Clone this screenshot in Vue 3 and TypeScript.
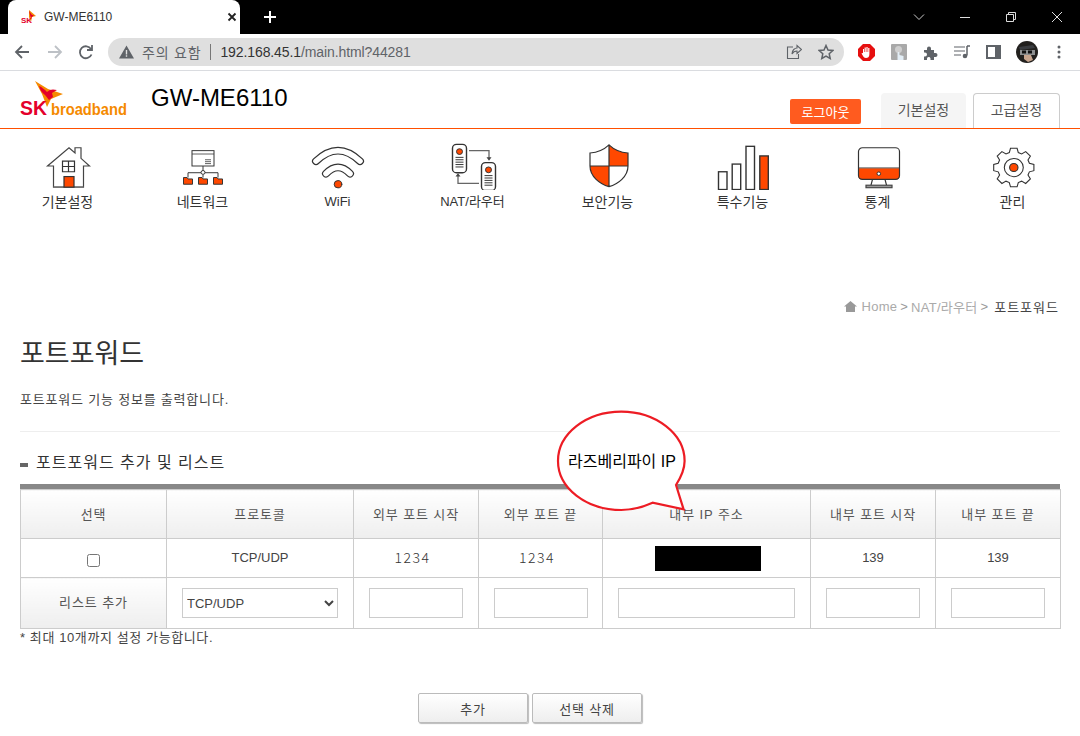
<script setup lang="ts">
interface PortRow {
  protocol: string
  extStart: string
  extEnd: string
  intStart: string
  intEnd: string
}

const columns = ['선택', '프로토콜', '외부 포트 시작', '외부 포트 끝', '내부 IP 주소', '내부 포트 시작', '내부 포트 끝']

const row: PortRow = {
  protocol: 'TCP/UDP',
  extStart: '1234',
  extEnd: '1234',
  intStart: '139',
  intEnd: '139'
}

// 8 teeth around the centre of the gear icon
function gearPath(cx: number, cy: number, outer: number, inner: number): string {
  const points: string[] = []
  const teeth = 8
  for (let i = 0; i < teeth; i++) {
    const a = (i * Math.PI * 2) / teeth - Math.PI / 2
    const step = Math.PI / teeth
    const offsets: [number, number][] = [
      [-step * 0.72, inner],
      [-step * 0.42, outer],
      [step * 0.42, outer],
      [step * 0.72, inner]
    ]
    for (const [d, r] of offsets) {
      points.push(`${(cx + Math.cos(a + d) * r).toFixed(1)} ${(cy + Math.sin(a + d) * r).toFixed(1)}`)
    }
  }
  return 'M' + points.join('L') + 'Z'
}

const gear = gearPath(30.8, 26.6, 20.4, 16.2)
</script>

<template>
  <div class="page">
    <div class="tabstrip">
      <div class="tab">
        <svg class="favicon" width="16" height="16" viewBox="0 0 16 16">
          <path d="M8 1l7 6-4 1-1 5-2-5z" fill="#f58a00" />
          <path d="M8 2l3 4 2 0-3 3-1-3z" fill="#e4002b" />
          <text x="0" y="14" class="favicon-text">SK</text>
        </svg>
        <span class="tab-title">GW-ME6110</span>
        <svg class="tab-close" width="10" height="10" viewBox="0 0 10 10">
          <path d="M1.5 1.5l7 7M8.5 1.5l-7 7" stroke="#222" stroke-width="1.8" />
        </svg>
      </div>
      <svg class="tab-new" width="14" height="14" viewBox="0 0 14 14">
        <path d="M7 1v12M1 7h12" stroke="#fff" stroke-width="2" />
      </svg>
      <div class="window-controls">
        <svg width="12" height="8" viewBox="0 0 12 8"><path d="M1 1.5l5 5 5-5" fill="none" stroke="#ccc" /></svg>
        <svg width="12" height="12" viewBox="0 0 12 12"><path d="M1 6.5h10" stroke="#ddd" /></svg>
        <svg width="12" height="12" viewBox="0 0 12 12"><path d="M1.5 3.5h7v7h-7zM3.5 3.5v-2h7v7h-2" fill="none" stroke="#ddd" /></svg>
        <svg width="12" height="12" viewBox="0 0 12 12"><path d="M1 1l10 10M11 1L1 11" stroke="#ddd" /></svg>
      </div>
    </div>

    <div class="toolbar">
      <svg class="nav-btn" width="16" height="16" viewBox="0 0 16 16"><path d="M15 8H2M8 2L2 8l6 6" fill="none" stroke="#5f6368" stroke-width="1.8" /></svg>
      <svg class="nav-btn" width="16" height="16" viewBox="0 0 16 16"><path d="M1 8h13M8 2l6 6-6 6" fill="none" stroke="#bdc1c6" stroke-width="1.8" /></svg>
      <svg class="nav-btn" width="16" height="16" viewBox="0 0 16 16"><path d="M13.5 10.5A6 6 0 1 1 13 5M14 1v5H9" fill="none" stroke="#5f6368" stroke-width="1.8" /></svg>
      <div class="omnibox">
        <svg width="15" height="14" viewBox="0 0 15 14"><path d="M7.5 0.5L15 13.5H0zM6.8 5v4.5h1.4V5zM6.8 10.3v1.5h1.4v-1.5z" fill="#5f6368" fill-rule="evenodd" /></svg>
        <span class="warn">주의 요함</span>
        <span class="sep"></span>
        <span class="url"><b>192.168.45.1</b>/main.html?44281</span>
        <svg class="omni-share" width="16" height="16" viewBox="0 0 16 16"><path d="M7 3H1.5v11.5h11V10M6 10c0-4 3-6 5-6V1.5L15.5 5.5 11 9.5V7C9 7 7 8 6 10z" fill="none" stroke="#5f6368" stroke-width="1.1" /></svg>
        <svg width="16" height="16" viewBox="0 0 16 16"><path d="M8 1.5l2 4.5 4.8.5-3.6 3.2 1 4.8L8 12l-4.2 2.5 1-4.8L1.2 6.5 6 6z" fill="none" stroke="#5f6368" stroke-width="1.5" /></svg>
      </div>
      <div class="extensions">
        <svg width="17" height="17" viewBox="0 0 17 17">
          <path d="M5 0h7l5 5v7l-5 5H5l-5-5V5z" fill="#e60f0f" />
          <path d="M5 8V5h1v3h.6V3.5h1.2V8h.6V3h1.2v5h.6V4h1.2v6c0 3-1.5 4-3.4 4-1.5 0-2.4-.8-3-2L3.6 9.5c.3-.6 1-.6 1.4 0z" fill="#fff" />
        </svg>
        <svg width="16" height="16" viewBox="0 0 16 16">
          <rect width="16" height="16" rx="1" fill="#a9a9a9" />
          <circle cx="7.5" cy="5.5" r="3.5" fill="#cfcfcf" />
          <path d="M6.5 16V9c0-1.5 2-1.5 2 0v2l4 1v4z" fill="#e3eef6" />
        </svg>
        <svg width="15" height="15" viewBox="0 0 15 15"><path d="M1 5h3V3.5a2 2 0 0 1 4 0V5h3v3h1.5a2 2 0 0 1 0 4H11v3H7.5v-1.5a1.8 1.8 0 0 0-3.5 0V15H1v-3.5h1a2 2 0 0 0 0-4H1z" fill="#5f6368" /></svg>
        <svg width="16" height="14" viewBox="0 0 16 14"><path d="M0 2h11M0 6h11M0 10h7" stroke="#5f6368" stroke-width="1.2" /><path d="M13 1v9.5M13 1h3" stroke="#5f6368" stroke-width="1.5" fill="none" /><circle cx="11" cy="11" r="2.3" fill="#5f6368" /></svg>
        <svg width="15" height="14" viewBox="0 0 15 14"><path d="M0 0h15v14H0zM2 2v10h7V2z" fill="#5f6368" fill-rule="evenodd" /></svg>
        <svg class="avatar" width="22" height="22" viewBox="0 0 22 22">
          <circle cx="11" cy="11" r="11" fill="#22201e" />
          <path d="M4 9h15v5H4z" fill="#8d8f90" />
          <path d="M8 14h7l2 5-5 2-4-3z" fill="#c7a58e" />
          <path d="M6 9.5h4v3H6zM12 9.5h4v3h-4z" fill="#111" />
          <path d="M3 6l14-2 2 3-15 2z" fill="#3a3c40" />
        </svg>
        <svg class="dots" width="4" height="14" viewBox="0 0 4 14"><circle cx="2" cy="2" r="1.5" fill="#5f6368" /><circle cx="2" cy="7" r="1.5" fill="#5f6368" /><circle cx="2" cy="12" r="1.5" fill="#5f6368" /></svg>
      </div>
    </div>

    <header class="site-head">
      <svg class="logo" width="116" height="40" viewBox="0 0 116 40">
        <path d="M15 1l13 8 15 5-12 5-4 8-5-13z" fill="#f58a00" />
        <path d="M19 6c3 1 6 4 8 6 3-3 6-3 10-2l-5 3 1 4-4 3-4-5c-3-2-5-5-6-9z" fill="#e4002b" />
        <text x="0" y="35" class="logo-sk" textLength="27" lengthAdjust="spacingAndGlyphs">SK</text>
        <text x="31" y="34.5" class="logo-bb" textLength="76" lengthAdjust="spacingAndGlyphs">broadband</text>
      </svg>
      <h1 class="model">GW-ME6110</h1>
      <div class="head-actions">
        <button class="logout" type="button">로그아웃</button>
        <a class="mode-tab mode-basic">기본설정</a>
        <a class="mode-tab mode-adv">고급설정</a>
      </div>
    </header>

    <nav class="menu">
      <a class="menu-item">
        <svg width="60" height="48" viewBox="0 0 60 50" preserveAspectRatio="none" fill="none" stroke="#333" stroke-width="1.2">
          <path d="M15.5 47V25H9.5L31 6l6 5.5V6h6v11l8.5 8H45.5v22z" stroke="#444" />
          <path d="M15.5 47h30" stroke="#777" stroke-width="1.5" />
          <path d="M24.5 20h12v11h-12zM30.5 20v11M24.5 25.5h12" />
          <rect x="26" y="36" width="10" height="11" fill="#ff4800" stroke="#333" />
        </svg>
        <span class="ko">기본설정</span>
      </a>
      <a class="menu-item">
        <svg width="60" height="48" viewBox="0 0 60 50" preserveAspectRatio="none" fill="none" stroke="#333" stroke-width="1">
          <rect x="19" y="9" width="22" height="16" />
          <path d="M19 12.5h22M32 18.5h6M32 20.5h6M32 22.5h6" stroke-width="0.8" />
          <path d="M30 25v5M15 37v-5h30v5M30 34v3" />
          <circle cx="30" cy="31.7" r="2" fill="#fff" />
          <path d="M10.5 37h3.5l1 1.5h4.5V44h-9zM25.5 37h3.5l1 1.5h4.5V44h-9zM40.5 37h3.5l1 1.5h4.5V44h-9z" fill="#ff4800" />
        </svg>
        <span class="ko">네트워크</span>
      </a>
      <a class="menu-item">
        <svg width="60" height="48" viewBox="0 0 60 50" preserveAspectRatio="none" fill="none" stroke-linecap="round">
          <path d="M8 20Q30-2 52 20" stroke="#333" stroke-width="8" />
          <path d="M8 20Q30-2 52 20" stroke="#fff" stroke-width="5.6" />
          <path d="M18 33Q30 20 42 33" stroke="#333" stroke-width="8" />
          <path d="M18 33Q30 20 42 33" stroke="#fff" stroke-width="5.6" />
          <circle cx="30" cy="44" r="3.8" fill="#ff4800" stroke="#333" stroke-width="1" />
        </svg>
        <span>WiFi</span>
      </a>
      <a class="menu-item">
        <svg width="60" height="48" viewBox="0 0 60 50" preserveAspectRatio="none" fill="none" stroke="#333" stroke-width="1">
          <rect x="9.5" y="2.5" width="14" height="29.5" rx="4" stroke-width="1.4" />
          <rect x="38.5" y="21.5" width="14" height="29" rx="4" stroke-width="1.4" />
          <circle cx="16.5" cy="10" r="3" fill="#ff4800" />
          <circle cx="45.5" cy="29" r="3" fill="#ff4800" />
          <path d="M12.5 16h8M12.5 18.5h8M12.5 21h8M12.5 23.5h8M12.5 26h8M41.5 35h8M41.5 37.5h8M41.5 40h8M41.5 42.5h8M41.5 45h8" />
          <path d="M26 9h20v8M36 43H15v-8" stroke="#666" stroke-width="1.3" />
          <path d="M43.5 16h5L46 19.5zM12.5 36h5L15 32.5z" fill="#444" stroke="none" />
        </svg>
        <span>NAT/라우터</span>
      </a>
      <a class="menu-item">
        <svg width="60" height="48" viewBox="0 0 60 50" preserveAspectRatio="none" fill="none" stroke="#333" stroke-width="1.2">
          <path d="M31 3V25H50V11.5C44 11 36 8 31 3z" fill="#ff4800" stroke="none" />
          <path d="M31 46.5V25H12C12 36 22 44 31 46.5z" fill="#ff4800" stroke="none" />
          <path d="M31 3C26 8 18 11 12 11.5V25C12 36 22 44 31 46.5C40 44 50 36 50 25V11.5C44 11 36 8 31 3zM31 3V46.5M12 25H50" />
        </svg>
        <span class="ko">보안기능</span>
      </a>
      <a class="menu-item">
        <svg width="60" height="48" viewBox="0 0 60 50" preserveAspectRatio="none" fill="none" stroke="#333" stroke-width="1.4">
          <rect x="5.5" y="31" width="8.5" height="18.5" />
          <rect x="19.2" y="23" width="8.5" height="26.5" />
          <rect x="33" y="4.5" width="8.5" height="45" />
          <rect x="46.8" y="14.5" width="8.5" height="35" fill="#ff4800" />
        </svg>
        <span class="ko">특수기능</span>
      </a>
      <a class="menu-item">
        <svg width="60" height="48" viewBox="0 0 60 50" preserveAspectRatio="none" fill="none" stroke="#333" stroke-width="1.2">
          <path d="M10.5 27V36a3 3 0 0 0 3 3H48.5a3 3 0 0 0 3-3V27z" fill="#ff4800" stroke="none" />
          <path d="M10.5 27h41" stroke="#777" stroke-width="1.4" />
          <rect x="10.5" y="6" width="41" height="33" rx="4" />
          <circle cx="30.8" cy="33" r="1.8" fill="#fff" stroke-width="1" />
          <path d="M24.5 39l-1.5 6M37 39l1.5 6" />
          <rect x="18" y="45" width="26" height="2.6" fill="#999" stroke="#444" />
        </svg>
        <span class="ko">통계</span>
      </a>
      <a class="menu-item">
        <svg width="60" height="48" viewBox="0 0 60 50" preserveAspectRatio="none" fill="none" stroke="#333" stroke-width="1.1">
          <path :d="gear" />
          <circle cx="30.8" cy="26.6" r="9.5" />
          <circle cx="30.8" cy="26.6" r="4.2" fill="#ff4800" />
        </svg>
        <span class="ko">관리</span>
      </a>
    </nav>

    <main class="content">
      <div class="crumbs">
        <svg width="13" height="11" viewBox="0 0 13 11"><path d="M6.5 0L13 5.5H11V11H2V5.5H0z" fill="#999" /></svg>
        <span class="crumb">Home</span><span class="gt gt-home">&gt;</span>
        <span class="crumb">NAT/라우터</span><span class="gt">&gt;</span>
        <span class="crumb-now">포트포워드</span>
      </div>

      <h2 class="page-title">포트포워드</h2>
      <p class="page-desc">포트포워드 기능 정보를 출력합니다.</p>

      <section class="section">
        <h3 class="section-title"><i class="bullet"></i>포트포워드 추가 및 리스트</h3>

        <div class="table-wrap">
          <table class="ports">
            <colgroup>
              <col class="c-select" />
              <col class="c-proto" />
              <col class="c-port" />
              <col class="c-port-end" />
              <col class="c-ip" />
              <col class="c-port" />
              <col class="c-port" />
            </colgroup>
            <thead>
              <tr>
                <th v-for="col in columns" :key="col">{{ col }}</th>
              </tr>
            </thead>
            <tbody>
              <tr class="row-data">
                <td><input class="check" type="checkbox" /></td>
                <td>{{ row.protocol }}</td>
                <td class="thin">{{ row.extStart }}</td>
                <td class="thin">{{ row.extEnd }}</td>
                <td><span class="redact"></span></td>
                <td>{{ row.intStart }}</td>
                <td>{{ row.intEnd }}</td>
              </tr>
              <tr class="row-add">
                <th>리스트 추가</th>
                <td>
                  <select class="field select">
                    <option>TCP/UDP</option>
                  </select>
                </td>
                <td><input class="field" type="text" /></td>
                <td><input class="field" type="text" /></td>
                <td><input class="field field-ip" type="text" /></td>
                <td><input class="field" type="text" /></td>
                <td><input class="field" type="text" /></td>
              </tr>
            </tbody>
          </table>
        </div>

        <p class="note">* 최대 10개까지 설정 가능합니다.</p>

        <div class="actions">
          <button class="btn" type="button">추가</button>
          <button class="btn" type="button">선택 삭제</button>
        </div>

        <!-- callout pasted over the screenshot -->
        <div class="bubble">
          <svg width="132" height="106" viewBox="0 0 132 106">
            <path
              d="M120 77C127 66 128.6 60 128.6 53C128.6 26 100 3.7 65.3 3.7C30 3.7 2 26 2 53C2 80 30 102 65.3 102C76 102 87 99 96.6 94.7L127.6 101.3z"
              fill="#fff"
              stroke="#ed1c24"
              stroke-width="2.2"
            />
          </svg>
          <span class="bubble-text">라즈베리파이 IP</span>
        </div>
      </section>
    </main>
  </div>
</template>

<style scoped>
.page {
  width: 1080px;
  height: 736px;
  overflow: hidden;
  background: #fff;
  color: #333;
  font-family: 'Liberation Sans', 'Noto Sans CJK KR', sans-serif;
  font-size: 12px;
}

.tabstrip {
  height: 34px;
  background: #000;
  display: flex;
  align-items: flex-end;
  padding-left: 8px;
}

.tab {
  width: 232px;
  height: 34px;
  box-sizing: border-box;
  background: #fff;
  border-radius: 8px 8px 0 0;
  display: flex;
  align-items: center;
  padding: 0 3px 1px 13px;
  color: #333;
  font-size: 12px;
}

.favicon-text {
  font-size: 8px;
  font-weight: 700;
  fill: #e4002b;
}

.tab-title {
  margin-left: 7px;
  flex: 1;
}

.tab-new {
  align-self: center;
  margin-left: 23px;
}

.window-controls {
  margin-left: auto;
  align-self: center;
  display: flex;
  align-items: center;
  gap: 34px;
  padding-right: 17px;
}

.toolbar {
  height: 36px;
  border-bottom: 1px solid #dadce0;
  display: flex;
  align-items: center;
  padding-left: 14px;
}

.nav-btn {
  margin-right: 17px;
}

.nav-btn:nth-child(2) {
  margin-right: 15px;
}

.nav-btn:nth-child(3) {
  margin-right: 14px;
}

.omnibox {
  width: 736px;
  height: 28px;
  box-sizing: border-box;
  background: #dfdfdf;
  border-radius: 14px;
  display: flex;
  align-items: center;
  padding: 0 10px 0 11px;
  color: #5f6368;
  font-size: 14px;
}

.warn {
  margin-left: 8px;
  font-size: 14px;
  letter-spacing: 0.8px;
  white-space: nowrap;
}

.sep {
  width: 1px;
  height: 16px;
  background: #777;
  margin: 0 9px;
}

.url {
  letter-spacing: -0.1px;
}

.url b {
  font-weight: 400;
  color: #333;
}

.omni-share {
  margin-left: auto;
  margin-right: 16px;
}

.extensions {
  display: flex;
  align-items: center;
  gap: 16px;
  margin-left: 14px;
}

.avatar {
  margin-left: -1px;
}

.dots {
  margin-left: 3px;
}

.site-head {
  height: 57px;
  border-bottom: 1px solid #ff4f00;
  display: flex;
  padding: 0 20px;
}

.logo {
  margin-top: 9px;
  flex: none;
}

.logo-sk {
  font-size: 20px;
  font-weight: 700;
  fill: #e4002b;
}

.logo-bb {
  font-size: 16px;
  font-weight: 700;
  fill: #f58a00;
}

.model {
  margin: 13px 0 0 15px;
  font-size: 24px;
  line-height: 28px;
  font-weight: 400;
  color: #000;
}

.head-actions {
  margin-left: auto;
  display: flex;
  align-items: flex-end;
}

.logout {
  width: 71px;
  height: 25px;
  margin: 0 20px 4px 0;
  padding: 0;
  border: 0;
  border-radius: 2px;
  background: #ff5b1f;
  color: #fff;
  font: inherit;
  font-size: 13px;
}

.mode-tab {
  width: 85px;
  height: 35px;
  box-sizing: border-box;
  padding-bottom: 4px;
  border-radius: 4px 4px 0 0;
  display: flex;
  align-items: center;
  justify-content: center;
  font-size: 14px;
  color: #555;
}

.mode-basic {
  background: #f5f5f5;
  margin-right: 7px;
}

.mode-adv {
  width: 87px;
  border: 1px solid #ccc;
  border-bottom: 0;
  background: #fff;
}

.menu {
  display: grid;
  grid-template-columns: repeat(8, 135px);
  height: 168px;
  padding-top: 13px;
  box-sizing: border-box;
}

.menu-item {
  display: flex;
  flex-direction: column;
  align-items: center;
  font-size: 13px;
  color: #333;
}

.menu-item svg {
  display: block;
  margin-bottom: 3px;
}

.menu-item span {
  line-height: 18px;
}

.menu-item .ko {
  font-size: 14px;
}

.content {
  padding: 0 20px;
}

.crumbs {
  display: flex;
  justify-content: flex-end;
  align-items: center;
  gap: 3px;
  padding-right: 2px;
  height: 18px;
  font-size: 13px;
}

.crumbs svg {
  margin-right: 1px;
}

.crumb {
  color: #aaa;
  letter-spacing: 0.3px;
}

.gt {
  color: #999;
  margin-right: 3px;
}

.gt-home {
  margin-right: 0;
}

.crumb-now {
  color: #444;
  font-size: 13px;
  letter-spacing: 1px;
  margin-right: -1px;
}

.page-title {
  margin: 23px 0 0;
  font-size: 27px;
  line-height: 32px;
  font-weight: 400;
  color: #333;
}

.page-desc {
  margin: 22px 0 0;
  font-size: 13px;
  line-height: 16px;
  letter-spacing: 0.8px;
  color: #444;
}

.section {
  position: relative;
  margin-top: 23px;
  border-top: 1px solid #eee;
}

.section-title {
  display: flex;
  align-items: center;
  margin: 21px 0 0;
  font-size: 16px;
  line-height: 20px;
  font-weight: 400;
  letter-spacing: 1px;
  color: #333;
}

.bullet {
  width: 8px;
  height: 4px;
  margin: 3px 8px 0 0;
  background: #666;
}

.table-wrap {
  margin-top: 11px;
  border-top: 5px solid #888;
}

.ports {
  width: 1041px;
  table-layout: fixed;
  border-collapse: collapse;
}

.c-select {
  width: 146px;
}

.c-proto {
  width: 187px;
}

.c-port {
  width: 125px;
}

.c-port-end {
  width: 124px;
}

.c-ip {
  width: 208px;
}

.ports th,
.ports td {
  border: 1px solid #ccc;
  padding: 0;
  text-align: center;
  font-size: 13px;
  font-weight: 400;
  color: #444;
}

.ports th {
  background: linear-gradient(180deg, #fff, #eee);
  letter-spacing: 0.9px;
  color: #555;
}

.ports thead tr {
  height: 49px;
}

.ports thead th {
  padding-bottom: 2px;
}

.row-data {
  height: 39px;
}

.row-data td {
  padding-bottom: 2px;
}

.row-add {
  height: 51px;
}

.row-add th {
  padding-bottom: 3px;
}

.check {
  display: block;
  width: 13px;
  height: 13px;
  margin: 6px auto 0;
}

.ports .thin {
  padding-right: 7px;
  font-size: 14px;
  font-weight: 300;
  letter-spacing: 1.5px;
  color: #333;
  font-family: 'Noto Sans CJK KR', sans-serif;
}

.redact {
  display: block;
  width: 106px;
  height: 25px;
  margin: 2px auto 0 52px;
  background: #000;
}

.field {
  display: block;
  width: 94px;
  height: 30px;
  box-sizing: border-box;
  margin: 0 auto;
  border: 1px solid #ccc;
  background: #fff;
  font: inherit;
}

.field-ip {
  width: 177px;
  margin-left: 15px;
}

.select {
  width: 156px;
  margin-left: 15px;
  font-size: 13px;
  color: #444;
}

.note {
  margin: 1px 0 0;
  font-size: 13px;
  line-height: 15px;
  letter-spacing: 0.6px;
  color: #444;
}

.actions {
  margin-top: 48px;
  display: flex;
  justify-content: center;
  gap: 4px;
  padding-right: 20px;
}

.btn {
  width: 110px;
  height: 30px;
  padding: 0;
  border: 1px solid #bbb;
  border-radius: 2px;
  background: linear-gradient(180deg, #fff, #eee);
  box-shadow: 1px 1px 1px #bbb;
  color: #444;
  font: inherit;
  font-size: 13px;
  letter-spacing: 0.8px;
}

.bubble {
  position: absolute;
  left: 536px;
  top: -24px;
  width: 132px;
  height: 106px;
}

.bubble svg {
  display: block;
}

.bubble-text {
  position: absolute;
  left: 12px;
  top: 44px;
  font-size: 16px;
  line-height: 20px;
  color: #000;
  white-space: nowrap;
}
</style>

<style>
html,
body {
  margin: 0;
  background: #fff;
}
</style>
